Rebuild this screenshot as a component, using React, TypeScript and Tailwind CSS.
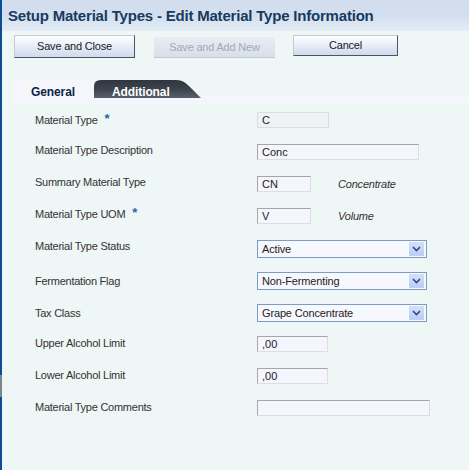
import type { ReactNode } from "react";

const FONT = "font-['Liberation_Sans',Arial,sans-serif]";

type Row = {
  label: string;
  required?: boolean;
  labelTop: string;
  control: ReactNode;
};

const TextBox = ({ value, width, readOnly }: { value: string; width: string; readOnly?: boolean }) => (
  <div
    className={
      readOnly
        ? `flex h-[16px] items-center border border-[#d6dde3] bg-[#eef2f5] pl-[4px] text-[11px] text-[#222] ${width}`
        : `flex h-[16px] items-center border border-t-[#a6a6a6] border-l-[#a6a6a6] border-r-[#dedede] border-b-[#dedede] bg-[#f5f6fd] pl-[4px] text-[11px] text-[#222] ${width}`
    }
  >
    {value}
  </div>
);

const Select = ({ value }: { value: string }) => (
  <div className="flex h-[18px] w-[170px] items-center justify-between border border-[#7c9cc4] bg-[#f7f8fe] pl-[4px] pr-[2px] text-[11px] tracking-[-0.15px] text-[#222]">
    <span>{value}</span>
    <span className="flex h-[14px] w-[15px] items-center justify-center bg-gradient-to-b from-[#d3dffa] to-[#bccef2]">
      <svg width="9" height="6" viewBox="0 0 9 6">
        <path d="M1 1 L4.5 4.5 L8 1" fill="none" stroke="#2d4d80" strokeWidth="1.6" />
      </svg>
    </span>
  </div>
);

const WithNote = ({ value, note }: { value: string; note: string }) => (
  <div className="flex items-center">
    <TextBox value={value} width="w-[54px]" />
    <span className="ml-[27px] text-[11px] italic tracking-[-0.2px] text-[#333]">{note}</span>
  </div>
);

const rows: Row[] = [
  { label: "Material Type", required: true, labelTop: "mt-[8px]", control: <TextBox value="C" width="w-[72px]" readOnly /> },
  { label: "Material Type Description", labelTop: "mt-[6px]", control: <TextBox value="Conc" width="w-[162px]" /> },
  { label: "Summary Material Type", labelTop: "mt-[6px]", control: <WithNote value="CN" note="Concentrate" /> },
  { label: "Material Type UOM", required: true, labelTop: "mt-[6px]", control: <WithNote value="V" note="Volume" /> },
  { label: "Material Type Status", labelTop: "mt-[6px]", control: <Select value="Active" /> },
  { label: "Fermentation Flag", labelTop: "mt-[9px]", control: <Select value="Non-Fermenting" /> },
  { label: "Tax Class", labelTop: "mt-[9px]", control: <Select value="Grape Concentrate" /> },
  { label: "Upper Alcohol Limit", labelTop: "mt-[7px]", control: <TextBox value=",00" width="w-[71px]" /> },
  { label: "Lower Alcohol Limit", labelTop: "mt-[7px]", control: <TextBox value=",00" width="w-[71px]" /> },
  { label: "Material Type Comments", labelTop: "mt-[7px]", control: <TextBox value="" width="w-[173px]" /> },
];

export default function App() {
  return (
    <div className={`flex h-[470px] w-[469px] overflow-hidden ${FONT}`}>
      {/* left frame edge */}
      <div className="flex w-[2px] flex-col">
        <div className="h-[375px] bg-[#0b4e95]" />
        <div className="h-[22px] bg-[#7b8590]" />
        <div className="flex-1 bg-[#0b4e95]" />
      </div>

      <div className="flex flex-1 flex-col bg-[#eef6f6]">
        {/* title bar */}
        <div className="flex h-[31px] items-start bg-gradient-to-b from-[#d2deed] via-[#d3dfee] to-[#e4edf6] pl-[6px] pt-[5px]">
          <h1 className="text-[15px] font-bold tracking-[-0.2px] text-[#173a60]">
            Setup Material Types - Edit Material Type Information
          </h1>
        </div>

        {/* action buttons */}
        <div className="mt-[4px] flex items-start pl-[12px]">
          <button
            type="button"
            className="h-[23px] w-[121px] border border-t-[#c4cad0] border-l-[#c4cad0] border-r-[#50545a] border-b-[#50545a] bg-gradient-to-b from-[#ffffff] to-[#cfdaee] pb-[1px] text-[11px] tracking-[-0.2px] text-[#1a1a1a]"
          >
            Save and Close
          </button>
          <button
            type="button"
            disabled
            className="ml-[19px] mt-[2px] h-[21px] w-[121px] border-b border-b-[#c3cad3] bg-gradient-to-b from-[#e8edf4] to-[#d8dfea] pt-[1px] text-[11px] tracking-[-0.2px] text-[#a2a9b3]"
          >
            Save and Add New
          </button>
          <button
            type="button"
            className="ml-[18px] h-[21px] w-[105px] border border-t-[#c4cad0] border-l-[#c4cad0] border-r-[#50545a] border-b-[#50545a] bg-gradient-to-b from-[#ffffff] to-[#cfdaee] text-[11px] tracking-[-0.2px] text-[#1a1a1a]"
          >
            Cancel
          </button>
        </div>

        {/* tabs */}
        <div className="relative ml-[11px] mt-[22px] flex h-[24px] items-start">
          <div className="absolute inset-x-0 bottom-0 top-[15px] bg-[#f4f6fc]" />
          <div className="relative flex h-[24px] w-[90px] items-start bg-[#f4f6fc] pl-[18px] pt-[3px] text-[12px] font-bold tracking-[-0.1px] text-[#0d2442]">
            General
          </div>
          <div className="relative -ml-[9px] flex h-[18px] w-[108px] items-start pl-[18px] pt-[3px] text-[12px] font-bold tracking-[-0.1px] text-white">
            <svg className="absolute left-0 top-0" width="108" height="18" viewBox="0 0 108 18">
              <defs>
                <linearGradient id="tabDark" x1="0" y1="0" x2="0" y2="1">
                  <stop offset="0" stopColor="#30363f" />
                  <stop offset="0.55" stopColor="#3e4550" />
                  <stop offset="1" stopColor="#59616c" />
                </linearGradient>
              </defs>
              <path d="M0 18 L0 6 Q0 0 7 0 L82 0 C90 0 94 5 98 9 L107 18 Z" fill="url(#tabDark)" />
            </svg>
            <span className="relative">Additional</span>
          </div>
        </div>

        {/* form rows */}
        <div className="flex flex-col">
          {rows.map((row) => (
            <div key={row.label} className="flex h-[32px] items-start pl-[33px]">
              <div className={`flex w-[222px] items-center text-[11px] leading-[16px] tracking-[-0.25px] text-[#333] ${row.labelTop}`}>
                <span>{row.label}</span>
                {row.required ? (
                  <span className="ml-[7px] -mt-[3px] text-[13px] font-bold text-[#2f62b5]">*</span>
                ) : null}
              </div>
              <div className="mt-[8px]">{row.control}</div>
            </div>
          ))}
        </div>
      </div>
    </div>
  );
}
